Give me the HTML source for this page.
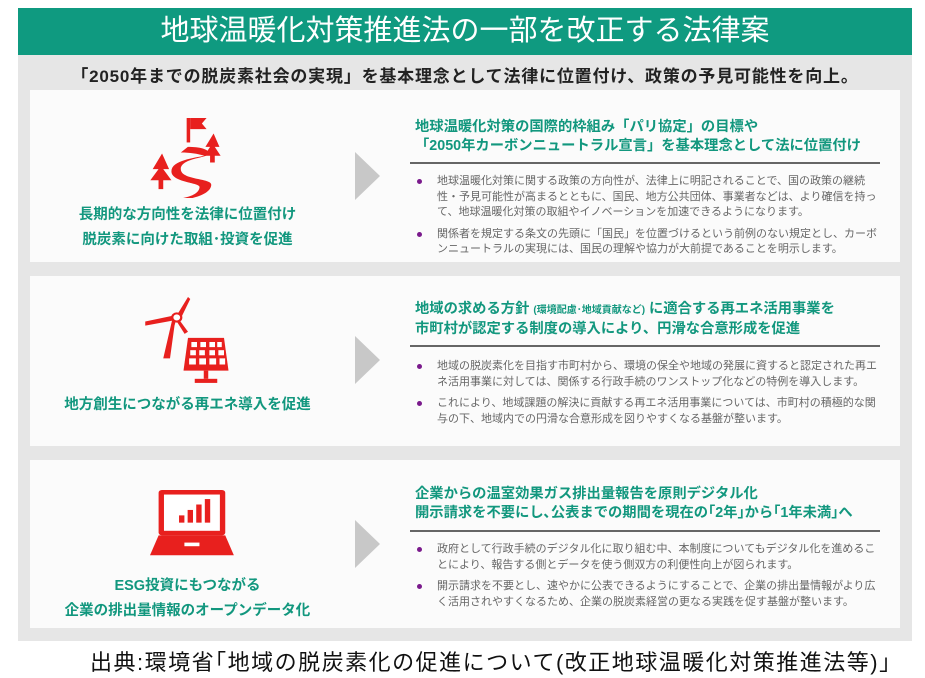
<!DOCTYPE html>
<html><head><meta charset="utf-8"><style>
*{margin:0;padding:0;box-sizing:border-box}
body{width:925px;height:678px;background:#fff;font-family:"Liberation Sans","Noto Sans CJK JP",sans-serif;position:relative;overflow:hidden}
.hdr{position:absolute;left:18px;top:8px;width:894px;height:47px;background:#0f9a80;color:#fff;font-size:29px;text-align:center;line-height:47px}
.gray{position:absolute;left:18px;top:55px;width:894px;height:586px;background:#e6e6e6}
.sub{position:absolute;left:18px;top:62px;width:894px;text-align:center;font-size:17px;letter-spacing:0.8px;font-weight:bold;color:#222;white-space:nowrap}
.card{position:absolute;left:30px;width:870px;background:#fbfbfb}
.lab{position:absolute;left:0;width:315px;text-align:center;color:#12977e;font-weight:bold;font-size:14.5px;line-height:25px}
.chev{position:absolute;left:325px;width:0;height:0;border-top:24px solid transparent;border-bottom:24px solid transparent;border-left:25px solid #c8c8c8}
.tt{position:absolute;left:385px;color:#12977e;font-weight:bold;font-size:14.3px;line-height:19px}
.ln{position:absolute;left:380px;width:470px;height:2px;background:#666}
.ul{position:absolute;left:385px;width:462px;font-size:11px;color:#666;line-height:15.5px;list-style:none}
.ul li{position:relative;padding-left:22px;margin-bottom:6px}
.ul li:before{content:"";position:absolute;left:2px;top:5px;width:5px;height:5px;border-radius:50%;background:#7a1a8c}
.foot{position:absolute;left:90px;top:645px;font-size:22px;letter-spacing:1.5px;color:#111;white-space:nowrap}
svg{position:absolute}
</style></head><body>
<div class="hdr">地球温暖化対策推進法の一部を改正する法律案</div>
<div class="gray"></div>
<div class="sub">「2050年までの脱炭素社会の実現」を基本理念として法律に位置付け、政策の予見可能性を向上。</div>

<div class="card" style="top:90px;height:172px">
<svg style="left:118px;top:28px" width="82" height="80" viewBox="0 0 70 72" preserveAspectRatio="none">
<rect x="33" y="0" width="3" height="22" fill="#e8201e"/><path d="M36 0h14l-4 5 4 5H36z" fill="#e8201e"/>
<path d="M34 26c10 0 18 2 18 6s-24 4-24 14 26 8 26 14-8 10-16 12h-8c10-2 14-6 14-10s-24-4-24-14 20-12 28-14c-6-2-12-3-20-3z" fill="#e8201e"/>
<path d="M56 14l-7 12h4l-5 8h5v6h4v-6h5l-5-8h4z" fill="#e8201e"/>
<path d="M12 32l-8 14h5l-7 10h7v8h4v-8h7l-7-10h5z" fill="#e8201e"/>
</svg>
<div class="lab" style="top:113px">長期的な方向性を法律に位置付け<br>脱炭素に向けた取組･投資を促進</div>
<div class="chev" style="top:62px"></div>
<div class="tt" style="top:28px">地球温暖化対策の国際的枠組み「パリ協定」の目標や<br>「2050年カーボンニュートラル宣言」を基本理念として法に位置付け</div>
<div class="ln" style="top:72px"></div>
<ul class="ul" style="top:84px"><li>地球温暖化対策に関する政策の方向性が、法律上に明記されることで、国の政策の継続性・予見可能性が高まるとともに、国民、地方公共団体、事業者などは、より確信を持って、地球温暖化対策の取組やイノベーションを加速できるようになります。</li><li>関係者を規定する条文の先頭に「国民」を位置づけるという前例のない規定とし、カーボンニュートラルの実現には、国民の理解や協力が大前提であることを明示します。</li></ul>
</div>

<div class="card" style="top:276px;height:170px">
<svg style="left:113px;top:21px" width="90" height="90" viewBox="0 0 80 88" preserveAspectRatio="none">
<path d="M30 20 L26 22 L18 60 L24 60 L28 28z" fill="#e8201e"/>
<path d="M30 18 L40 0 L42 2 L34 20z" fill="#e8201e"/>
<path d="M28 18 L2 24 L2 28 L27 23z" fill="#e8201e"/>
<path d="M32 22 L40 34 L37 36 L30 24z" fill="#e8201e"/>
<circle cx="30" cy="20" r="4" fill="#fff" stroke="#e8201e" stroke-width="2"/>
<path d="M40 40 L72 40 L76 72 L36 72z" fill="#e8201e"/>
<g fill="#fff"><rect x="43" y="44" width="5" height="5"/><rect x="51" y="44" width="5" height="5"/><rect x="59" y="44" width="5" height="5"/><rect x="66" y="44" width="4" height="5"/>
<rect x="42" y="52" width="5" height="5"/><rect x="50" y="52" width="5" height="5"/><rect x="59" y="52" width="5" height="5"/><rect x="67" y="52" width="5" height="5"/>
<rect x="41" y="60" width="6" height="6"/><rect x="50" y="60" width="6" height="6"/><rect x="59" y="60" width="6" height="6"/><rect x="68" y="60" width="5" height="6"/></g>
<rect x="54" y="72" width="4" height="8" fill="#e8201e"/><rect x="46" y="80" width="20" height="4" fill="#e8201e"/>
</svg>
<div class="lab" style="top:117px">地方創生につながる再エネ導入を促進</div>
<div class="chev" style="top:60px"></div>
<div class="tt" style="top:24px">地域の求める方針 <span style="font-size:10px">(環境配慮･地域貢献など)</span> に適合する再エネ活用事業を<br>市町村が認定する制度の導入により、円滑な合意形成を促進</div>
<div class="ln" style="top:69px"></div>
<ul class="ul" style="top:83px"><li>地域の脱炭素化を目指す市町村から、環境の保全や地域の発展に資すると認定された再エネ活用事業に対しては、関係する行政手続のワンストップ化などの特例を導入します。</li><li>これにより、地域課題の解決に貢献する再エネ活用事業については、市町村の積極的な関与の下、地域内での円滑な合意形成を図りやすくなる基盤が整います。</li></ul>
</div>

<div class="card" style="top:460px;height:168px">
<svg style="left:120px;top:30px" width="86" height="68" viewBox="0 0 80 75" preserveAspectRatio="none">
<rect x="8" y="0" width="62" height="50" rx="3" fill="#e8201e"/>
<rect x="13" y="5" width="52" height="40" fill="#fff"/>
<g fill="#e8201e"><rect x="27" y="28" width="5" height="8"/><rect x="35" y="22" width="5" height="14"/><rect x="43" y="16" width="5" height="20"/><rect x="51" y="10" width="5" height="26"/></g>
<path d="M8 50 L70 50 L78 72 L0 72z" fill="#e8201e"/>
<rect x="32" y="58" width="14" height="4" fill="#fff"/>
</svg>
<div class="lab" style="top:114px">ESG投資にもつながる<br>企業の排出量情報のオープンデータ化</div>
<div class="chev" style="top:60px"></div>
<div class="tt" style="top:25px">企業からの温室効果ガス排出量報告を原則デジタル化<br>開示請求を不要にし､公表までの期間を現在の｢2年｣から｢1年未満｣へ</div>
<div class="ln" style="top:70px"></div>
<ul class="ul" style="top:82px"><li>政府として行政手続のデジタル化に取り組む中、本制度についてもデジタル化を進めることにより、報告する側とデータを使う側双方の利便性向上が図られます。</li><li>開示請求を不要とし、速やかに公表できるようにすることで、企業の排出量情報がより広く活用されやすくなるため、企業の脱炭素経営の更なる実践を促す基盤が整います。</li></ul>
</div>

<div class="foot">出典:環境省｢地域の脱炭素化の促進について(改正地球温暖化対策推進法等)｣</div>
</body></html>
